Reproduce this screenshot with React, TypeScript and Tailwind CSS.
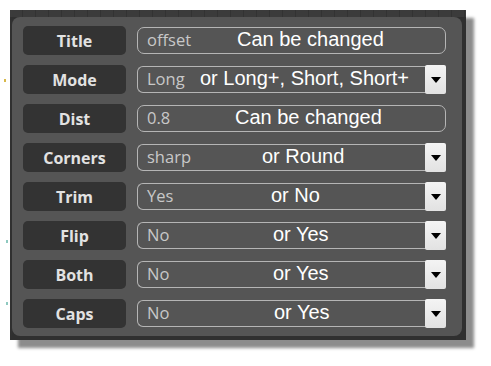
import React from "react";

type Row = {
  label: string;
  value: string;
  note: string;
  noteMl: string;
  select: boolean;
};

const rows: Row[] = [
  { label: "Title", value: "offset", note: "Can be changed", noteMl: "ml-[43px]", select: false },
  { label: "Mode", value: "Long", note: "or Long+, Short, Short+", noteMl: "ml-[6px]", select: true },
  { label: "Dist", value: "0.8", note: "Can be changed", noteMl: "ml-[41px]", select: false },
  { label: "Corners", value: "sharp", note: "or Round", noteMl: "ml-[68px]", select: true },
  { label: "Trim", value: "Yes", note: "or No", noteMl: "ml-[77px]", select: true },
  { label: "Flip", value: "No", note: "or Yes", noteMl: "ml-[79px]", select: true },
  { label: "Both", value: "No", note: "or Yes", noteMl: "ml-[79px]", select: true },
  { label: "Caps", value: "No", note: "or Yes", noteMl: "ml-[80px]", select: true },
];

function Arrow() {
  return (
    <svg width="10" height="6" viewBox="0 0 10 6">
      <path d="M0 0 L10 0 L5 6 Z" fill="#000" />
    </svg>
  );
}

export default function App() {
  return (
    <div className="w-[491px] h-[366px] bg-white relative" style={{ fontFamily: '"Open Sans", sans-serif' }}>
      <div className="absolute left-[4px] top-[79px] w-[2px] h-[3px] bg-[#d8b84a]" />
      <div className="absolute left-[6px] top-[240px] w-[2px] h-[3px] bg-[#8fc9c0]" />
      <div className="absolute left-[6px] top-[302px] w-[2px] h-[3px] bg-[#8fc9c0]" />
      <div className="pt-[10px] pl-[10px]">
        <div className="w-[456px] h-[330px] bg-[#303030] flex flex-col pl-[2px] pr-[4px] pb-[4px] shadow-[8px_8px_3px_#8c8c8c]">
          <div className="h-[7px] -ml-[2px] -mr-[4px] bg-[repeating-linear-gradient(90deg,#3b3b3b_0px,#3b3b3b_12px,#333_12px,#333_13px)]" />
          <div className="flex-1 bg-[#555555] rounded-[8px] pt-[9px] pl-[11px] pr-[16px] flex flex-col gap-[10px]">
            {rows.map((r) => (
              <div key={r.label} className="flex items-center h-[29px] gap-[11px]">
                <div className="w-[103px] h-[29px] shrink-0 rounded-[5px] bg-[#333333] flex items-center justify-center text-[16px] font-bold text-[#e2e2e2] leading-none">
                  {r.label}
                </div>
                <div
                  className={
                    "flex-1 h-[27px] border border-[#b5b5b5] flex items-center relative " +
                    (r.select ? "rounded-l-[6px] rounded-r-[3px] border-r-0" : "rounded-[7px]")
                  }
                >
                  <span className="pl-[9px] text-[16.5px] text-[#c8c8c8] leading-none w-[56px] shrink-0 whitespace-nowrap">{r.value}</span>
                  <span
                    className={r.noteMl + " whitespace-nowrap text-[20px] text-white leading-none -mt-[3px]"}
                    style={{ fontFamily: '"Liberation Sans", Arial, sans-serif' }}
                  >
                    {r.note}
                  </span>
                  {r.select && (
                    <div className="absolute right-0 top-[-2px] w-[21px] h-[29px] rounded-[2px] bg-gradient-to-b from-[#f4f4f4] to-[#e2e2e2] flex items-center justify-center">
                      <Arrow />
                    </div>
                  )}
                </div>
              </div>
            ))}
          </div>
        </div>
      </div>
    </div>
  );
}
